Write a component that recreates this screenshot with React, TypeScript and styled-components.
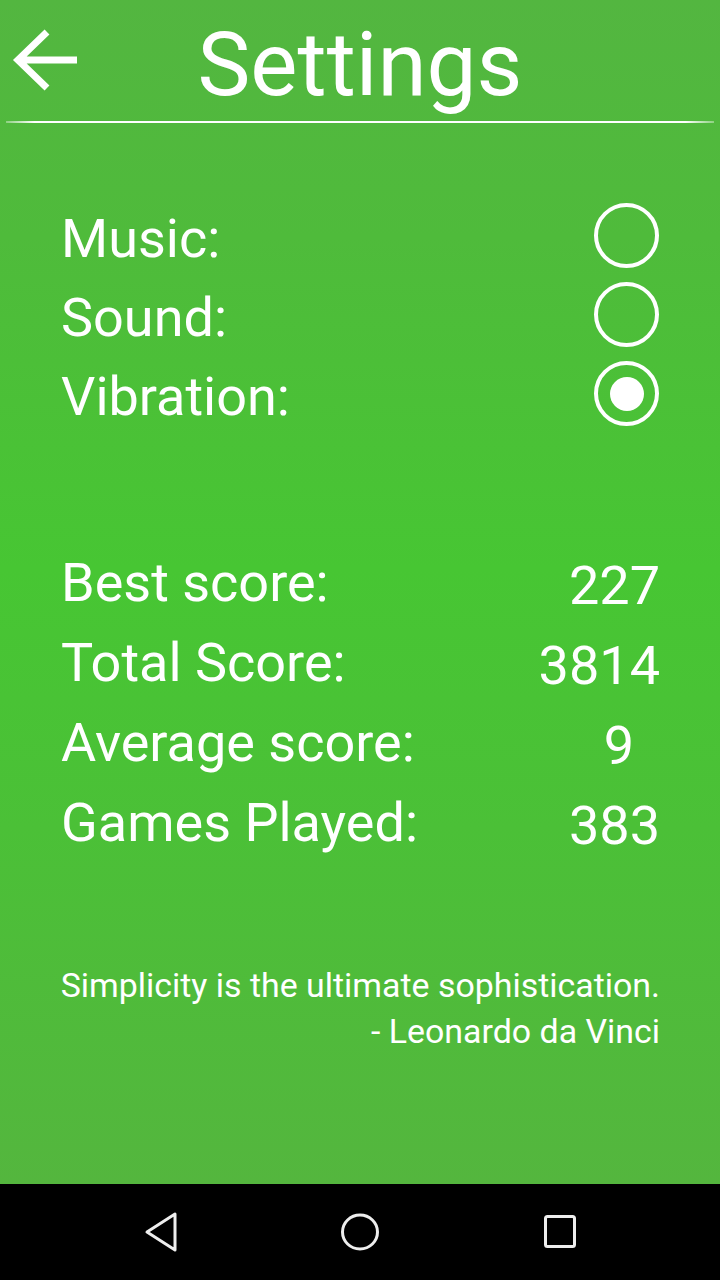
import React from "react";
import styled, { createGlobalStyle } from "styled-components";

const Global = createGlobalStyle`
  html, body { margin: 0; padding: 0; background: #000; }
  body { font-family: Roboto, "Noto Sans", sans-serif; }
  * { box-sizing: border-box; }
`;

const Screen = styled.div`
  width: 720px;
  height: 1280px;
  display: flex;
  flex-direction: column;
  overflow: hidden;
`;

const Main = styled.main`
  height: 1184px;
  display: flex;
  flex-direction: column;
  color: #fff;
  background: linear-gradient(
    to bottom,
    #53b640 0%,
    #4fbb3b 20%,
    #47c633 48%,
    #4bc037 70%,
    #54b63e 100%
  );
`;

const Header = styled.header`
  display: grid;
  grid-template-columns: 1fr auto 1fr;
  align-items: start;
  padding-top: 20px;
`;

const BackButton = styled.button`
  justify-self: start;
  margin: 8px 0 0 10px;
  padding: 0;
  border: none;
  background: none;
  width: 72px;
  height: 64px;
  display: flex;
  cursor: pointer;
`;

const Title = styled.h1`
  margin: 0;
  font-family: Roboto, sans-serif;
  font-weight: 400;
  font-size: 89px;
  line-height: 90px;
  color: #fff;
`;

const Divider = styled.div`
  height: 2px;
  margin: 11px 6px 0;
  background: linear-gradient(
    to right,
    rgba(255, 255, 255, 0.35),
    #fff 4%,
    #fff 96%,
    rgba(255, 255, 255, 0.35)
  );
`;

const Section = styled.section<{ $top: number }>`
  margin-top: ${(p) => p.$top}px;
  padding: 0 60px 0 61px;
  display: flex;
  flex-direction: column;
`;

const Row = styled.div<{ $h: number }>`
  display: flex;
  align-items: center;
  justify-content: space-between;
  height: ${(p) => p.$h}px;
`;

const Label = styled.span<{ $h: number }>`
  font-size: 54px;
  line-height: ${(p) => p.$h}px;
  white-space: nowrap;
`;

const Value = styled.span<{ $pad?: number }>`
  font-size: 54px;
  line-height: 80px;
  padding-top: 5px;
  padding-right: ${(p) => p.$pad ?? 0}px;
`;

const Radio = styled.span<{ $checked?: boolean }>`
  width: 65px;
  height: 65px;
  margin-bottom: 6px;
  margin-right: 1px;
  border: 4px solid #fff;
  border-radius: 50%;
  display: flex;
  align-items: center;
  justify-content: center;
  &::after {
    content: "";
    display: ${(p) => (p.$checked ? "block" : "none")};
    width: 34px;
    height: 34px;
    border-radius: 50%;
    background: #fff;
  }
`;

const Quote = styled.blockquote`
  margin: 100px 0 0;
  padding: 0 60px 0 58px;
  text-align: right;
  font-size: 33.9px;
  line-height: 46px;
`;

const QuoteLine = styled.p`
  margin: 0;
  white-space: nowrap;
`;

const NavBar = styled.nav`
  height: 96px;
  background: #000;
  display: flex;
  align-items: center;
  justify-content: center;
  gap: 152px;
`;

const NavIcon = styled.svg`
  width: 48px;
  height: 48px;
  display: block;
`;

const settings = [
  { label: "Music:", checked: false },
  { label: "Sound:", checked: false },
  { label: "Vibration:", checked: true },
];

const stats = [
  { label: "Best score:", value: "227", pad: 0 },
  { label: "Total Score:", value: "3814", pad: 0 },
  { label: "Average score:", value: "9", pad: 26 },
  { label: "Games Played:", value: "383", pad: 0 },
];

export default function App() {
  return (
    <Screen>
      <Global />
      <Main>
        <Header>
          <BackButton aria-label="Back">
            <svg width="72" height="64" viewBox="0 0 72 64" fill="none">
              <path
                d="M67 32 H8 M37 4 L8 32 L37 60"
                stroke="#fff"
                strokeWidth="7"
                strokeLinejoin="miter"
              />
            </svg>
          </BackButton>
          <Title>Settings</Title>
          <span />
        </Header>
        <Divider />

        <Section $top={76}>
          {settings.map((s) => (
            <Row key={s.label} $h={79}>
              <Label $h={79}>{s.label}</Label>
              <Radio $checked={s.checked} />
            </Row>
          ))}
        </Section>

        <Section $top={107}>
          {stats.map((s) => (
            <Row key={s.label} $h={80}>
              <Label $h={80}>{s.label}</Label>
              <Value $pad={s.pad}>{s.value}</Value>
            </Row>
          ))}
        </Section>

        <Quote>
          <QuoteLine>Simplicity is the ultimate sophistication.</QuoteLine>
          <QuoteLine>- Leonardo da Vinci</QuoteLine>
        </Quote>
      </Main>

      <NavBar>
        <NavIcon viewBox="0 0 48 48" fill="none">
          <path
            d="M11 24 L39 6 V42 Z"
            stroke="#eee"
            strokeWidth="3"
            strokeLinejoin="round"
          />
        </NavIcon>
        <NavIcon viewBox="0 0 48 48" fill="none">
          <ellipse cx="24" cy="24" rx="17.5" ry="17" stroke="#eee" strokeWidth="3" />
        </NavIcon>
        <NavIcon viewBox="0 0 48 48" fill="none">
          <rect x="9.5" y="8.5" width="29" height="30" rx="2" stroke="#eee" strokeWidth="3" />
        </NavIcon>
      </NavBar>
    </Screen>
  );
}
